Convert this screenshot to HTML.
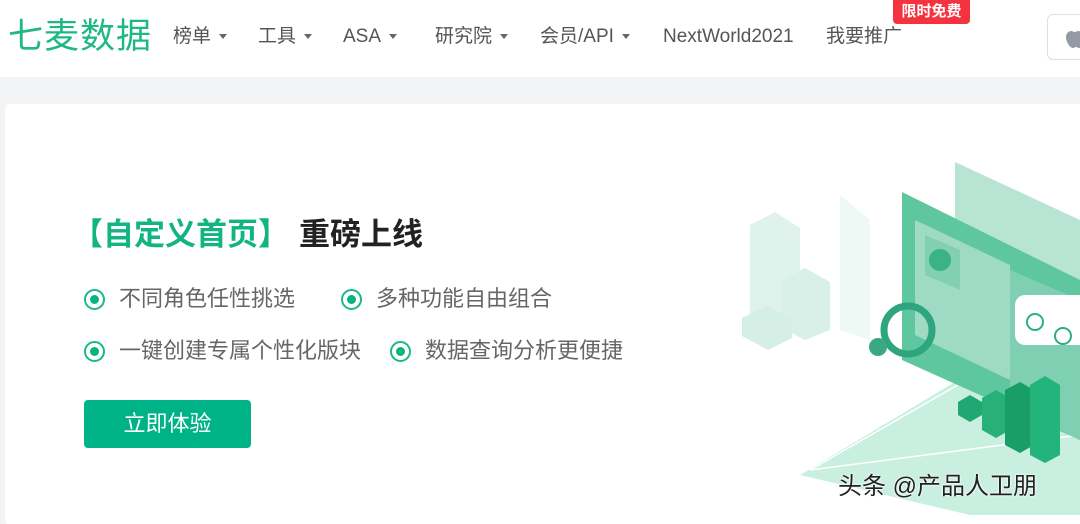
<!DOCTYPE html>
<html><head><meta charset="utf-8"><style>
*{margin:0;padding:0;box-sizing:border-box}
body{width:1080px;height:515px;overflow:hidden;background:#f2f3f5;font-family:"Liberation Sans","Noto Sans CJK SC",sans-serif;position:relative}
.hdr{position:absolute;left:0;top:0;width:1080px;height:77px;background:#fff}
.logo{position:absolute;left:8px;top:12px;font-size:35px;line-height:50px;color:#1db886;letter-spacing:1px}
.nav{position:absolute;top:24px;height:26px;line-height:26px;font-size:19px;color:#555;white-space:nowrap}
.car{position:relative;display:inline-block;width:0;height:0;border-left:4px solid transparent;border-right:4px solid transparent;border-top:5px solid #666;margin-left:8px;top:-3px}
.badge{position:absolute;left:893px;top:0;width:77px;height:24px;background:#f5333f;color:#fff;font-size:15px;font-weight:bold;text-align:center;line-height:24px;border-radius:0 0 4px 4px}
.apple{position:absolute;left:1047px;top:14px;width:60px;height:46px;border:1px solid #dcdfe4;border-radius:6px;background:#fff}
.card{position:absolute;left:5px;top:104px;width:1100px;height:420px;background:#fff;border-radius:4px}
.t{position:absolute;left:72px;top:213px;font-size:31px;line-height:44px;font-weight:bold;white-space:nowrap}
.b{position:absolute;font-size:22px;line-height:30px;color:#666;white-space:nowrap}
.c{position:absolute;width:21px;height:21px;border:2px solid #1db886;border-radius:50%;}
.c:after{content:"";position:absolute;left:4px;top:4px;width:9px;height:9px;background:#08b283;border-radius:50%}
.btn{position:absolute;left:84px;top:400px;width:167px;height:48px;background:#00b386;border-radius:4px;color:#fff;font-size:22px;text-align:center;line-height:48px}
.wm{position:absolute;left:838px;top:470px;font-size:24px;line-height:34px;color:#222;text-shadow:0 0 2px #fff,0 0 2px #fff;white-space:nowrap}
</style></head><body>
<div class="hdr">
<div class="logo">七麦数据</div>
<div class="nav" style="left:173px">榜单<span class="car"></span></div>
<div class="nav" style="left:258px">工具<span class="car"></span></div>
<div class="nav" style="left:343px">ASA<span class="car"></span></div>
<div class="nav" style="left:435px">研究院<span class="car"></span></div>
<div class="nav" style="left:540px">会员/API<span class="car"></span></div>
<div class="nav" style="left:663px">NextWorld2021</div>
<div class="nav" style="left:826px">我要推广</div>
<div class="badge">限时免费</div>
<div class="apple"><svg width="20" height="24" style="position:absolute;left:18px;top:11px"><path d="M12 5c2 0 4 1 5 3-3 2-2 6 1 7-1 3-3 7-5 7-1 0-2-1-3-1s-2 1-3 1C4 22 0 16 0 11c0-4 3-6 5-6 1 0 3 1 4 1s2-1 3-1z" fill="#939aa6"/></svg></div>
</div>
<div class="card"></div>
<svg style="position:absolute;left:720px;top:140px" width="360" height="375">
<polygon points="80,335 255,230 360,290 360,375 250,375" fill="#c9efe0"/>
<polygon points="90,330 255,235 360,295" fill="none" stroke="#fff" stroke-width="1.5"/>
<polygon points="120,55 150,80 150,200 120,190" fill="#eef8f4"/>
<polygon points="30,85 55,72 80,88 80,190 55,200 30,185" fill="#dff3ec"/>
<polygon points="62,140 85,128 110,142 110,190 85,200 62,188" fill="#d9f0e8"/>
<polygon points="22,178 48,165 72,180 72,198 48,210 22,196" fill="#d6efe6"/>
<polygon points="235,22 360,80 360,200 235,150" fill="#b8e4d3"/>
<polygon points="182,52 360,140 360,300 182,220" fill="#5ec7a0"/>
<polygon points="195,80 290,125 290,240 195,195" fill="#9fdbc4"/>
<polygon points="205,95 240,110 240,150 205,135" fill="#82cfb2"/>
<circle cx="220" cy="120" r="11" fill="#3ab389"/>
<polygon points="290,130 360,160 360,300 290,265" fill="#7fd0b2"/>
<rect x="295" y="155" width="75" height="50" rx="10" fill="#fff"/>
<circle cx="315" cy="182" r="8" fill="none" stroke="#2fae82" stroke-width="2"/>
<circle cx="343" cy="196" r="8" fill="none" stroke="#2fae82" stroke-width="2"/>
<circle cx="188" cy="190" r="24" fill="none" stroke="#2ea57e" stroke-width="7"/>
<circle cx="158" cy="207" r="9" fill="#3aa883"/>
<polygon points="238,262 250,255 262,262 262,275 250,282 238,275" fill="#20a872"/>
<polygon points="262,258 276,250 290,258 290,290 276,298 262,290" fill="#27b077"/>
<polygon points="285,250 300,242 314,250 314,305 300,313 285,305" fill="#1a9e67"/>
<polygon points="310,245 325,236 340,245 340,315 325,323 310,315" fill="#22b47a"/>
</svg>
<div class="t"><span style="color:#12b482">【自定义首页】</span><span style="color:#222;margin-left:10px">重磅上线</span></div>
<div class="c" style="left:84px;top:289px"></div><div class="b" style="left:119px;top:284px">不同角色任性挑选</div>
<div class="c" style="left:341px;top:289px"></div><div class="b" style="left:376px;top:284px">多种功能自由组合</div>
<div class="c" style="left:84px;top:341px"></div><div class="b" style="left:119px;top:336px">一键创建专属个性化版块</div>
<div class="c" style="left:390px;top:341px"></div><div class="b" style="left:425px;top:336px">数据查询分析更便捷</div>
<div class="btn">立即体验</div>
<div class="wm">头条 @产品人卫朋</div>
</body></html>
